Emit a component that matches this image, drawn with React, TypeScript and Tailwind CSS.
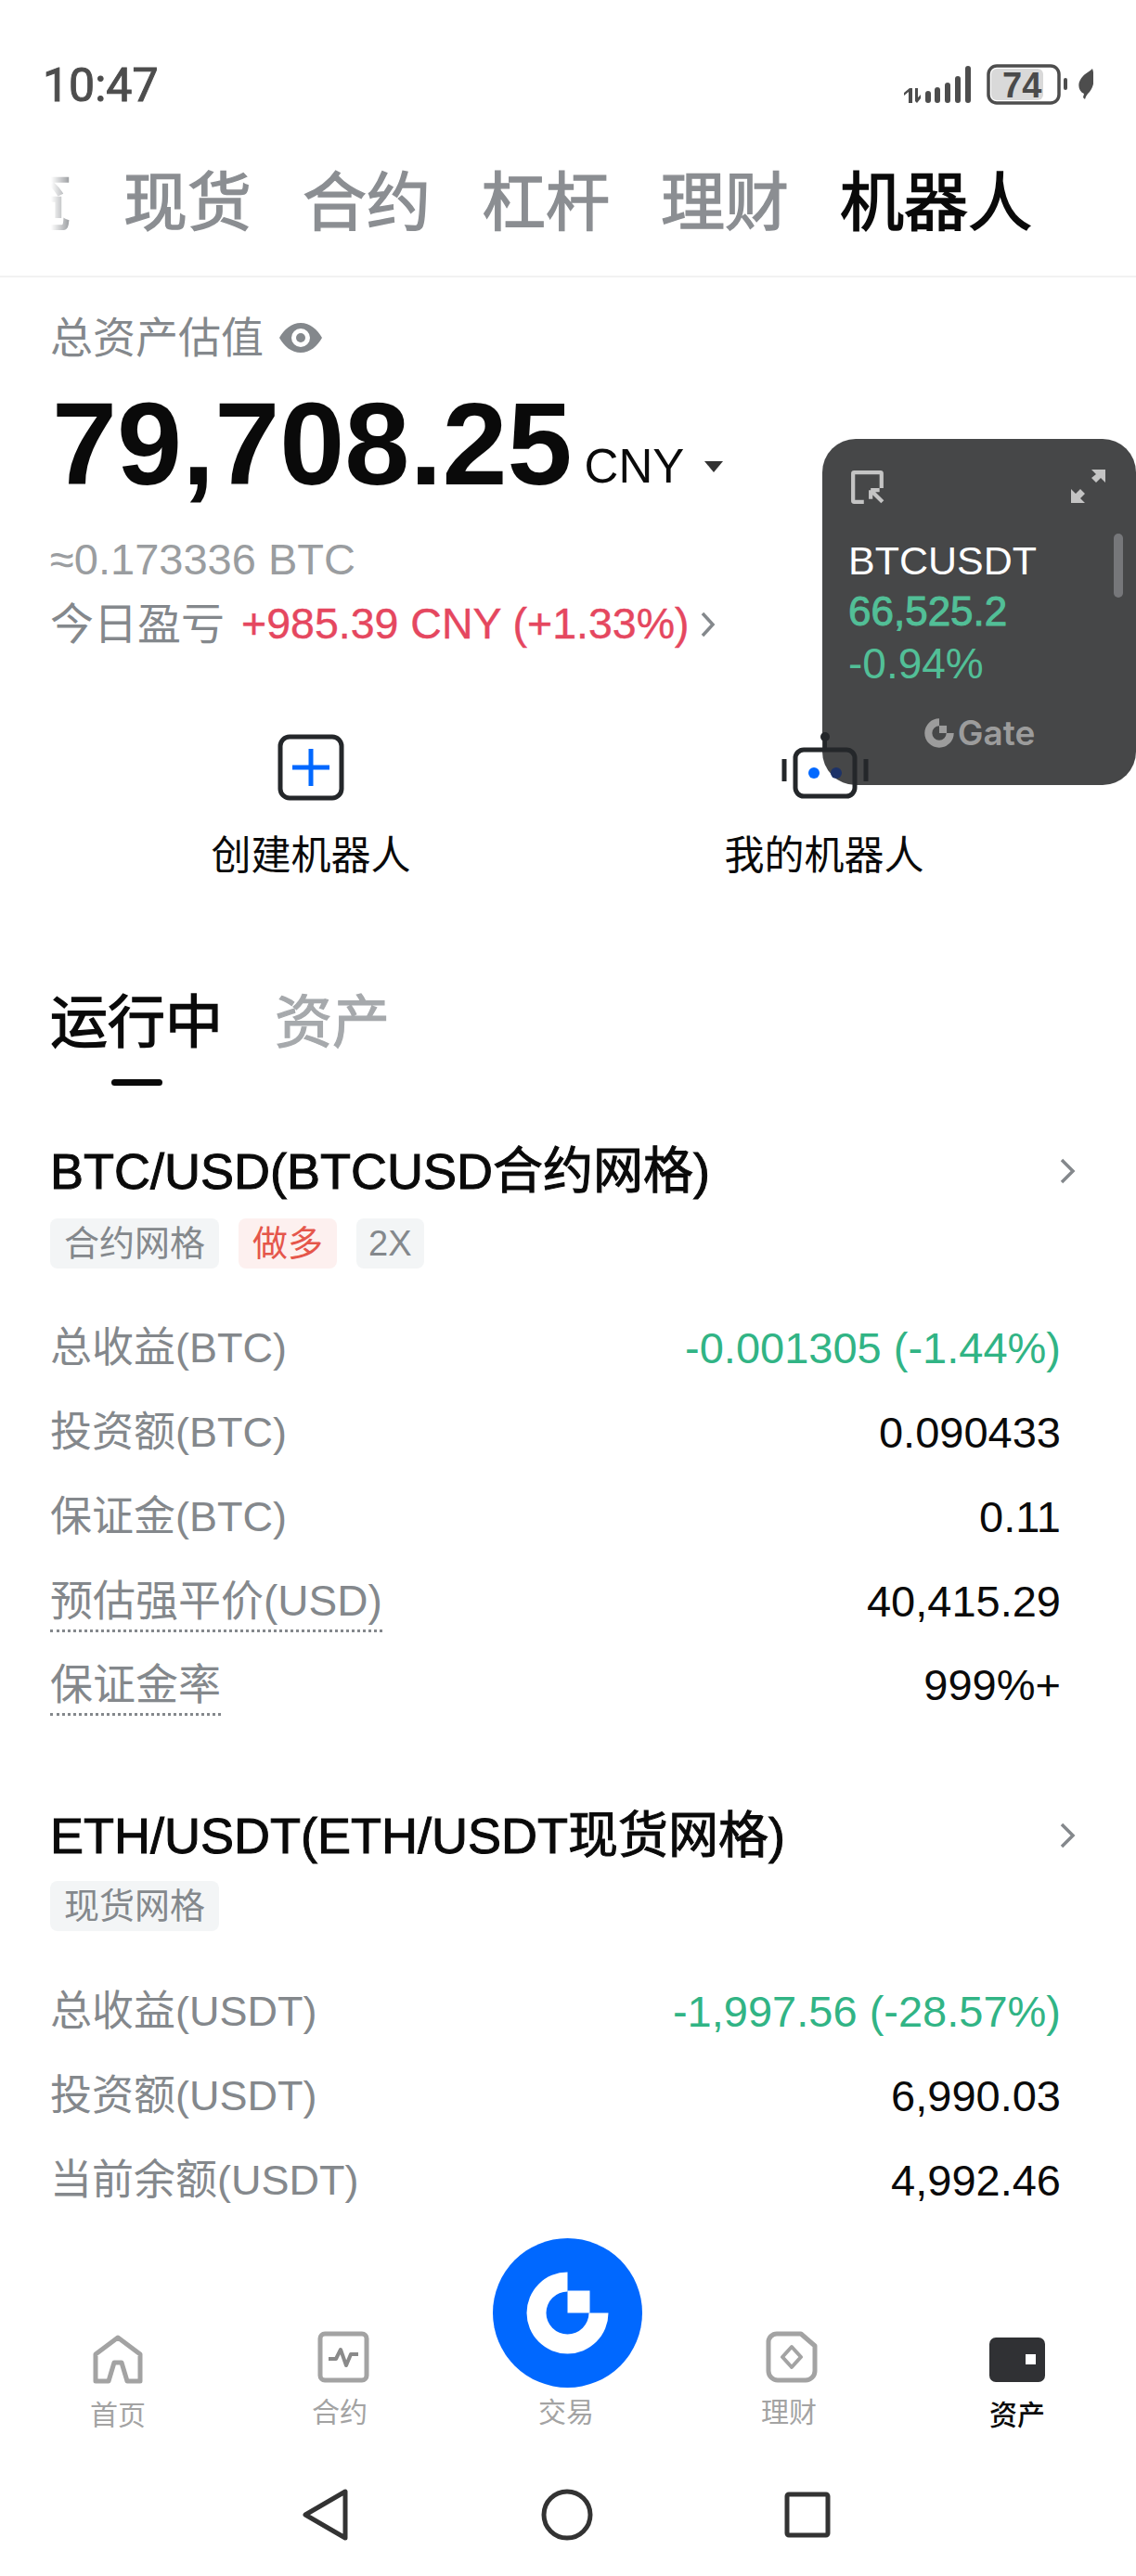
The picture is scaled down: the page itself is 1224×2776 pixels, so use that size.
const font = "[font-family:'Liberation_Sans','Noto_Sans_CJK_SC',sans-serif]";

function StatusIcons() {
  return (
    <div className="relative h-[48px] w-[206px]">
      <svg width="206" height="48" viewBox="972 68 206 48">
        <g fill="#4d4d4d">
          <path d="M979 111v-12l-5 4v-3l6-5h3v16z" />
          <path d="M986 95h3v10l3-3v4l-4 5-2-2z" />
          <rect x="997" y="98" width="6" height="13" rx="3" />
          <rect x="1007" y="94" width="6" height="17" rx="3" />
          <rect x="1018" y="89" width="6" height="22" rx="3" />
          <rect x="1029" y="82" width="6" height="29" rx="3" />
          <rect x="1040" y="71" width="6" height="40" rx="3" />
          <rect x="1068" y="74" width="56" height="34" rx="6" fill="#d9d9d9" />
          <rect x="1065" y="71" width="76" height="40" rx="9" fill="none" stroke="#4d4d4d" strokeWidth="3.5" />
          <rect x="1146" y="84" width="4" height="13" rx="2" />
          <path d="M1177 74c3 9 2 19-3 25-2 2-4 4-5 8l-2-2 1-4c-6-3-7-10-4-15 3-6 9-8 13-12z" />
        </g>
      </svg>
      <span className={`absolute left-[108px] top-[5px] text-[38px] leading-[38px] font-bold text-[#4a4a4a] ${font}`}>74</span>
    </div>
  );
}

function Tag({ text, red, narrow }: { text: string; red?: boolean; narrow?: boolean }) {
  return (
    <span
      className={`flex h-[54px] items-center rounded-[8px] text-[38px] ${narrow ? "px-[13px]" : "px-[15px]"} ${
        red ? "bg-[#fdf0ef] text-[#e5564b]" : "bg-[#f3f5f6] text-[#84888c]"
      }`}
    >
      {text}
    </span>
  );
}

function Row({ label, value, green, dotted, height }: { label: string; value: string; green?: boolean; dotted?: boolean; height?: string }) {
  return (
    <div className={`flex items-center justify-between pr-[81px] ${height ?? "h-[91px]"}`}>
      <span className={`leading-[62px] text-[#84888c] ${dotted ? "border-b-[3px] border-dotted border-[#84888c] text-[46px]" : "text-[45px]"}`}>{label}</span>
      <span className={`text-[47px] leading-[60px] ${green ? "text-[#31b485]" : "text-[#0a0a0a]"}`}>{value}</span>
    </div>
  );
}

function CardTitle({ text }: { text: string }) {
  return (
    <div className="flex h-[60px] items-center justify-between pr-[64px]">
      <span className="text-[54px] leading-[60px] font-normal text-[#0a0a0a] [-webkit-text-stroke:1px_#0a0a0a]">{text}</span>
      <svg width="20" height="30" viewBox="0 0 20 30" fill="none" stroke="#84888c" strokeWidth="3.5">
        <path d="M4 3l12 12L4 27" />
      </svg>
    </div>
  );
}

function NavItem({ label, active, high, className, children }: { label: string; active?: boolean; high?: boolean; className?: string; children: React.ReactNode }) {
  return (
    <div className={`flex w-[60px] flex-col items-center ${className ?? ""}`}>
      <div className="flex h-[56px] w-[60px] items-center justify-center">{children}</div>
      <span className={`text-[30px] leading-[36px] whitespace-nowrap ${high ? "mt-[11px]" : "mt-[14px]"} ${active ? "font-medium text-[#0a0a0a]" : "text-[#a3a3a3]"}`}>{label}</span>
    </div>
  );
}

function Widget() {
  return (
    <div className={`absolute left-[886px] top-[473px] z-10 flex h-[373px] w-[338px] flex-col rounded-[36px] bg-[#464748] pl-[28px] ${font}`}>
      <div className="mt-[33px] flex items-start justify-between pr-[32px]">
        <svg width="38" height="38" viewBox="0 0 36 36" fill="none" stroke="#c4c4c4" strokeWidth="4" className="ml-[2px]">
          <path d="M14 33H4a1 1 0 0 1-1-1V4a1 1 0 0 1 1-1h27a1 1 0 0 1 1 1v15" strokeLinejoin="round" />
          <path d="M21 21h9M21 21v9M21 21l12 12" />
        </svg>
        <svg width="38" height="36" viewBox="0 0 38 36" fill="#c4c4c4">
          <path d="M22 0h15v14l-5-5-5 5-5-5 5-4zM0 36V21l5 5 5-5 5 5-5 5 5 5z" />
        </svg>
      </div>
      <span className="mt-[35px] text-[43px] leading-[50px] text-white">BTCUSDT</span>
      <span className="mt-[4px] text-[44px] leading-[52px] font-normal text-[#52bf97] [-webkit-text-stroke:1px_#52bf97]">66,525.2</span>
      <span className="mt-[3px] text-[46px] leading-[54px] text-[#52bf97]">-0.94%</span>
      <div className="mt-[28px] flex items-center justify-center pr-[28px]">
        <svg width="34" height="34" viewBox="-80 -80 160 160" className="mr-[3px]">
          <path d="M0-74A74 74 0 1 0 74 0H36A36 36 0 1 1 0-36z" fill="#9c9c9c" />
          <rect x="0" y="-38" width="38" height="38" fill="#9c9c9c" />
        </svg>
        <span className="text-[37px] leading-[40px] font-semibold text-[#9c9c9c] [font-family:Inter,sans-serif]">Gate</span>
      </div>
      <div className="absolute right-[14px] top-[102px] h-[69px] w-[10px] rounded-full bg-[#76777a]" />
    </div>
  );
}

export default function App() {
  return (
    <div className={`relative flex h-[2776px] w-[1224px] flex-col overflow-hidden bg-white ${font}`}>
      <div className="mt-[68px] flex h-[48px] items-center justify-between px-[46px]">
        <span className="text-[50px] leading-[48px] font-normal text-[#4d4d4d] [-webkit-text-stroke:1px_#4d4d4d] [font-family:Roboto,sans-serif]">10:47</span>
        <StatusIcons />
      </div>

      <div className="mt-[64px] flex h-[80px] items-center gap-[55px] pl-[55px] text-[69px] leading-[80px] font-normal text-[#8b8e92] [-webkit-text-stroke:1.4px_#8b8e92]">
        <span className="flex w-[23px] justify-end overflow-hidden [mask-image:linear-gradient(to_right,transparent,black)]">
          <span className="shrink-0">览</span>
        </span>
        <span>现货</span>
        <span>合约</span>
        <span>杠杆</span>
        <span>理财</span>
        <span className="text-[#0a0a0a] [-webkit-text-stroke:1.6px_#0a0a0a]">机器人</span>
      </div>
      <div className="mt-[37px] h-[2px] bg-[#f2f2f2]" />

      <main className="min-h-0 flex-1 overflow-hidden pl-[54px]">
        <div className="mt-[37px] flex h-[56px] items-center text-[46px] text-[#84888c]">
          <span>总资产估值</span>
          <svg width="46" height="32" viewBox="0 0 46 32" className="ml-[17px]" fill="#84888c">
            <path fillRule="evenodd" d="M23 0c10 0 18 7 23 16-5 9-13 16-23 16S5 25 0 16C5 7 13 0 23 0zm0 6a10 10 0 1 0 0 20 10 10 0 0 0 0-20z" />
            <circle cx="23" cy="16" r="5" />
          </svg>
        </div>
        <div className="mt-[27px] ml-[2px] flex h-[120px] items-end">
          <span className="text-[126px] leading-[120px] font-bold text-[#0a0a0a]">79,708.25</span>
          <span className="mb-[8px] ml-[13px] text-[51px] leading-[56px] text-[#0a0a0a]">CNY</span>
          <span className="mb-[30px] ml-[22px] h-0 w-0 border-x-[10px] border-t-[12px] border-x-transparent border-t-[#333]" />
        </div>
        <div className="mt-[36px] flex h-[56px] items-center text-[47px] text-[#9a9da0]">≈0.173336 BTC</div>
        <div className="mt-[14px] flex h-[56px] items-center text-[47px]">
          <span className="text-[#84888c]">今日盈亏</span>
          <span className="ml-[18px] text-[46.5px] text-[#e5475f] [-webkit-text-stroke:0.4px_#e5475f]">+985.39 CNY (+1.33%)</span>
          <svg width="20" height="30" viewBox="0 0 20 30" className="ml-[10px]" fill="none" stroke="#84888c" strokeWidth="3.5">
            <path d="M4 3l11 12L4 27" />
          </svg>
        </div>

        <div className="mt-[90px] flex">
          <div className="flex w-[562px] flex-col items-center">
            <svg width="72" height="72" viewBox="0 0 72 72" fill="none" className="mb-[31px]">
              <rect x="3" y="3" width="66" height="66" rx="10" stroke="#24272a" strokeWidth="5" />
              <path d="M36 16v40M16 36h40" stroke="#0068ff" strokeWidth="5" />
            </svg>
            <span className="text-[43px] leading-[56px] text-[#0a0a0a]">创建机器人</span>
          </div>
          <div className="flex w-[544px] flex-col items-center">
            <svg width="94" height="72" viewBox="0 0 94 72" fill="none" className="relative z-20 mb-[35px] -mt-[4px] translate-x-[1px] translate-y-[2px]">
              <circle cx="47" cy="5" r="5" fill="#24272a" />
              <path d="M47 8v12" stroke="#24272a" strokeWidth="4" />
              <rect x="15" y="19" width="64" height="50" rx="9" stroke="#24272a" strokeWidth="5" />
              <path d="M3 29v24M91 29v24" stroke="#24272a" strokeWidth="5" />
              <circle cx="35" cy="44" r="6" fill="#0068ff" />
              <circle cx="59" cy="44" r="6" fill="#1c3268" />
            </svg>
            <span className="text-[43px] leading-[56px] text-[#0a0a0a]">我的机器人</span>
          </div>
        </div>

        <div className="mt-[113px] flex h-[80px] items-center gap-[56px] text-[62px] leading-[80px] font-normal">
          <span className="text-[#0a0a0a] [-webkit-text-stroke:1.4px_#0a0a0a]">运行中</span>
          <span className="text-[#a6a9ac] [-webkit-text-stroke:1.2px_#a6a9ac]">资产</span>
        </div>
        <div className="mt-[20px] ml-[66px] h-[7px] w-[55px] rounded-full bg-[#0a0a0a]" />

        <div className="mt-[62px]"><CardTitle text="BTC/USD(BTCUSD合约网格)" /></div>
        <div className="mt-[21px] flex gap-[21px]">
          <Tag text="合约网格" />
          <Tag text="做多" red />
          <Tag text="2X" narrow />
        </div>
        <div className="mt-[40px]">
          <Row label="总收益(BTC)" value="-0.001305 (-1.44%)" green />
          <Row label="投资额(BTC)" value="0.090433" />
          <Row label="保证金(BTC)" value="0.11" />
          <Row label="预估强平价(USD)" value="40,415.29" dotted height="h-[92px]" />
          <Row label="保证金率" value="999%+" dotted height="h-[88px]" />
        </div>

        <div className="mt-[88px]"><CardTitle text="ETH/USDT(ETH/USDT现货网格)" /></div>
        <div className="mt-[19px] flex gap-[19px]">
          <Tag text="现货网格" />
        </div>
        <div className="mt-[41px]">
          <Row label="总收益(USDT)" value="-1,997.56 (-28.57%)" green />
          <Row label="投资额(USDT)" value="6,990.03" />
          <Row label="当前余额(USDT)" value="4,992.46" />
        </div>
      </main>

      <div className="relative flex pb-[39px] pl-[97px]">
        <NavItem label="首页">
          <svg width="56" height="54" viewBox="0 0 56 54" fill="none" stroke="#a3a3a3" strokeWidth="5" strokeLinejoin="round">
            <path d="M4 50V21L28 3l24 18v29H38l-6-20h-8l-6 20z" />
          </svg>
        </NavItem>
        <NavItem label="合约" high className="ml-[179px]">
          <svg width="56" height="56" viewBox="0 0 56 56" fill="none" stroke="#a3a3a3" strokeWidth="5" strokeLinejoin="round" className="-mt-[6px] ml-[8px] shrink-0">
            <rect x="3" y="3" width="50" height="50" rx="5" />
            <path d="M12 30h8l5-10 6 17 5-12h8" strokeWidth="4" stroke="#8a8a8a" />
          </svg>
        </NavItem>
        <NavItem label="交易" high className="ml-[184px]">
          <div />
        </NavItem>
        <NavItem label="理财" high className="ml-[180px]">
          <svg width="56" height="56" viewBox="0 0 56 56" fill="none" stroke="#a3a3a3" strokeWidth="5" strokeLinejoin="round" className="-mt-[6px] ml-[6px] shrink-0">
            <path d="M12 3h26l15 13v27a10 10 0 0 1-10 10H13A10 10 0 0 1 3 43V12a9 9 0 0 1 9-9z" />
            <path d="M28 17l10 11-10 11-10-11z" strokeWidth="4" />
          </svg>
        </NavItem>
        <NavItem label="资产" active className="ml-[186px]">
          <svg width="60" height="48" viewBox="0 0 60 48">
            <rect width="60" height="48" rx="7" fill="#303134" />
            <rect x="39" y="18" width="11" height="11" fill="#fff" />
          </svg>
        </NavItem>
        <div className="absolute left-[531px] -top-[103px] flex h-[161px] w-[161px] items-center justify-center rounded-full bg-[#0068ff]">
          <svg width="161" height="161" viewBox="-80.5 -80.5 161 161">
            <path d="M0-44A44 44 0 1 0 44 0H23A23 23 0 1 1 0-23z" fill="#fff" />
            <rect x="0" y="-24" width="24" height="24" fill="#fff" />
          </svg>
        </div>
      </div>

      <div className="flex h-[100px] items-center justify-center gap-[206px] pr-[4px]">
        <svg width="52" height="56" viewBox="0 0 52 56" fill="none" stroke="#333" strokeWidth="5" strokeLinejoin="round">
          <path d="M47 3v50L4 28z" />
        </svg>
        <svg width="56" height="56" viewBox="0 0 56 56" fill="none" stroke="#333" strokeWidth="5">
          <circle cx="28" cy="28" r="25" />
        </svg>
        <svg width="50" height="50" viewBox="0 0 50 50" fill="none" stroke="#333" strokeWidth="5" strokeLinejoin="round">
          <rect x="3" y="3" width="44" height="44" rx="2" />
        </svg>
      </div>
      <div className="h-[16px]" />
      <Widget />
    </div>
  );
}
